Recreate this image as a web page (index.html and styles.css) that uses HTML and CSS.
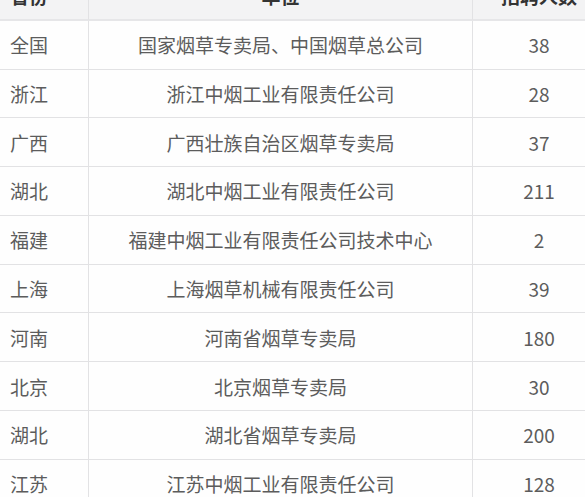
FILE: index.html
```html
<!DOCTYPE html>
<html lang="zh-CN">
<head>
<meta charset="utf-8">
<link rel="stylesheet" href="styles.css">
</head>
<body>
<div class="table">
  <div class="cell head c1">省份</div>
  <div class="cell head c2">单位</div>
  <div class="cell head c3">招聘人数</div>

  <div class="cell c1">全国</div>
  <div class="cell c2">国家烟草专卖局、中国烟草总公司</div>
  <div class="cell c3">38</div>

  <div class="cell c1">浙江</div>
  <div class="cell c2">浙江中烟工业有限责任公司</div>
  <div class="cell c3">28</div>

  <div class="cell c1">广西</div>
  <div class="cell c2">广西壮族自治区烟草专卖局</div>
  <div class="cell c3">37</div>

  <div class="cell c1">湖北</div>
  <div class="cell c2">湖北中烟工业有限责任公司</div>
  <div class="cell c3">211</div>

  <div class="cell c1">福建</div>
  <div class="cell c2">福建中烟工业有限责任公司技术中心</div>
  <div class="cell c3">2</div>

  <div class="cell c1">上海</div>
  <div class="cell c2">上海烟草机械有限责任公司</div>
  <div class="cell c3">39</div>

  <div class="cell c1">河南</div>
  <div class="cell c2">河南省烟草专卖局</div>
  <div class="cell c3">180</div>

  <div class="cell c1">北京</div>
  <div class="cell c2">北京烟草专卖局</div>
  <div class="cell c3">30</div>

  <div class="cell c1">湖北</div>
  <div class="cell c2">湖北省烟草专卖局</div>
  <div class="cell c3">200</div>

  <div class="cell c1">江苏</div>
  <div class="cell c2">江苏中烟工业有限责任公司</div>
  <div class="cell c3">128</div>
</div>
</body>
</html>
```

FILE: styles.css
```css
html, body {
  margin: 0;
  padding: 0;
  background: #ffffff;
  overflow: hidden;
}

body {
  width: 585px;
  height: 497px;
  font-family: "Noto Sans CJK SC", "Noto Sans", sans-serif;
}

.table {
  display: grid;
  grid-template-columns: 89px 384px 128px;
  grid-auto-rows: 48.78px;
  width: 601px;
  margin-top: -28px;
}

.cell {
  box-sizing: border-box;
  display: flex;
  align-items: center;
  justify-content: center;
  font-size: 19px;
  color: #5c5c5c;
  background: #fefefe;
  border-bottom: 1px solid #e2e2e4;
  white-space: nowrap;
}

.c1 {
  justify-content: flex-start;
  padding-left: 10px;
  border-right: 1px solid #e2e2e4;
}

.c2 {
  border-right: 1px solid #e2e2e4;
}

.c3 {
  padding-left: 4px;
}

.head {
  background: #f3f3f4;
  color: #333333;
  font-weight: bold;
  border-bottom: 2px solid #e6e6e8;
}
```
